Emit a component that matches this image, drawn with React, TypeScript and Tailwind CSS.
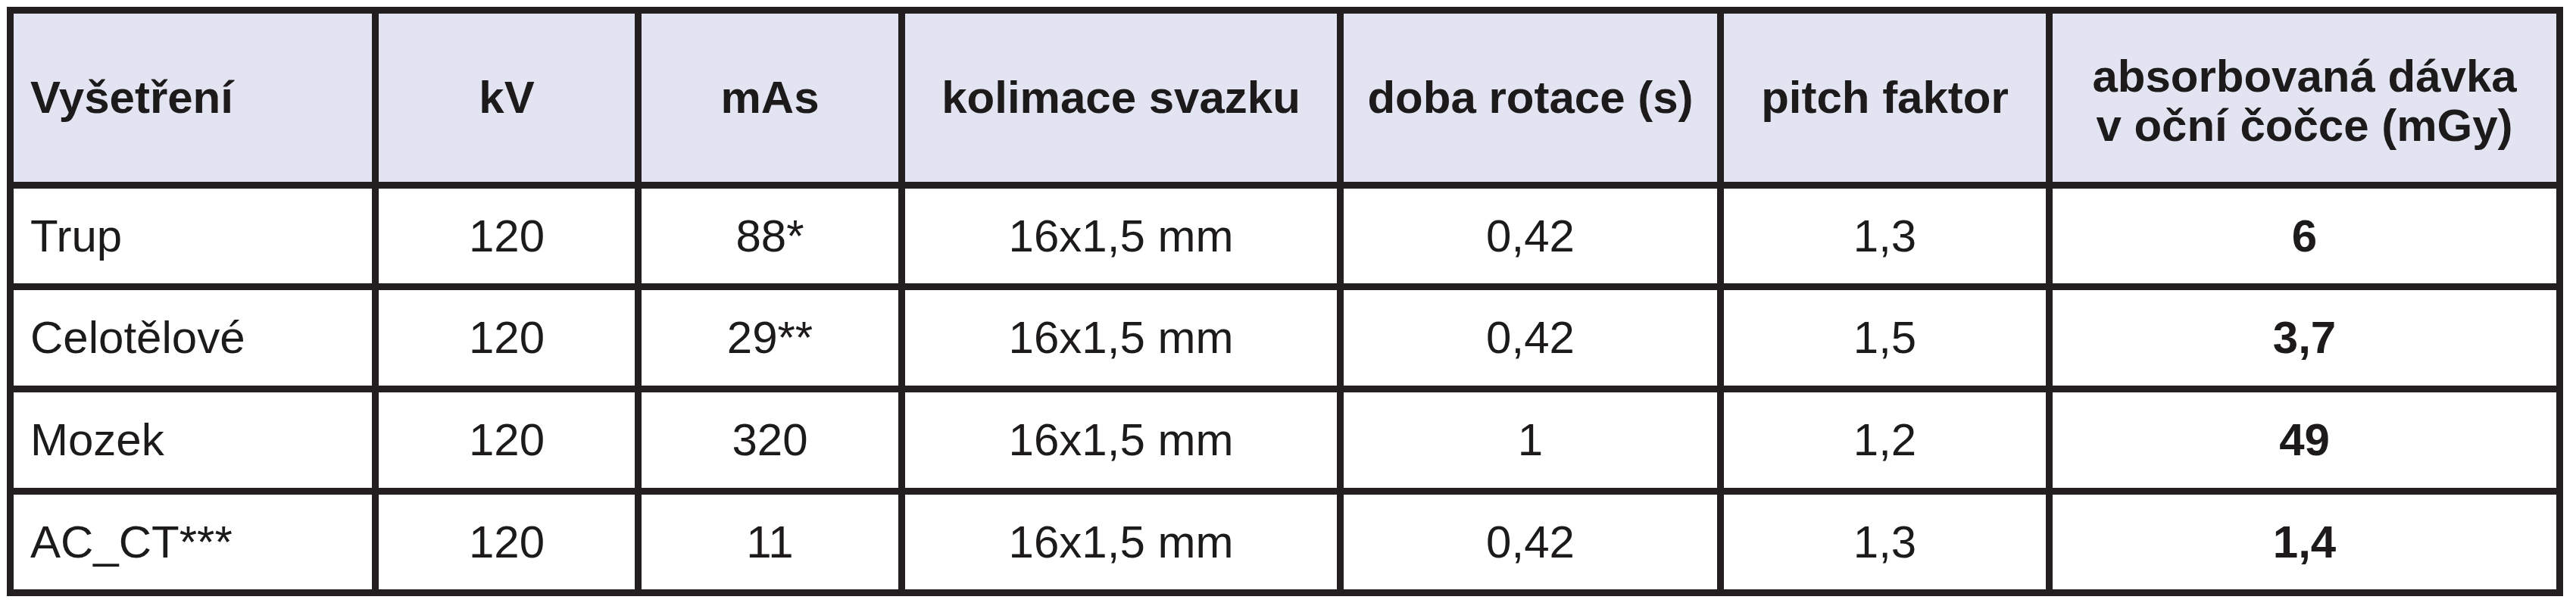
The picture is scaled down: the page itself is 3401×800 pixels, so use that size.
import React from 'react';

type Row = {
  name: string;
  kv: string;
  mas: string;
  kolimace: string;
  rotace: string;
  pitch: string;
  davka: string;
};

const rows: Row[] = [
  { name: 'Trup', kv: '120', mas: '88*', kolimace: '16x1,5 mm', rotace: '0,42', pitch: '1,3', davka: '6' },
  { name: 'Celotělové', kv: '120', mas: '29**', kolimace: '16x1,5 mm', rotace: '0,42', pitch: '1,5', davka: '3,7' },
  { name: 'Mozek', kv: '120', mas: '320', kolimace: '16x1,5 mm', rotace: '1', pitch: '1,2', davka: '49' },
  { name: 'AC_CT***', kv: '120', mas: '11', kolimace: '16x1,5 mm', rotace: '0,42', pitch: '1,3', davka: '1,4' },
];

const headers = ['kV', 'mAs', 'kolimace svazku', 'doba rotace (s)', 'pitch faktor'];

export default function App() {
  return (
    <div className="min-h-[800px] w-[3401px] bg-white pl-[9px] pt-[9px] font-['Liberation_Sans',Arial,sans-serif] text-[60px] text-[#1d1a1b]">
      <div className="grid w-[3375px] grid-cols-[473px_338px_339px_570px_493px_425px_665px] grid-rows-[222px_125px_126px_126px_125px] gap-[9px] bg-[#231f20] p-[9px]">
        {/* header */}
        <div className="flex items-center bg-[#e2e5f1] pl-[22px] font-bold leading-none">Vyšetření</div>
        {headers.map((h) => (
          <div key={h} className="flex items-center justify-center bg-[#e2e5f1] font-bold leading-none">
            {h}
          </div>
        ))}
        <div className="flex items-center justify-center bg-[#e2e5f1] pt-[8px] text-center font-bold leading-[65px]">
          absorbovaná dávka
          <br />
          v oční čočce (mGy)
        </div>

        {/* body */}
        {rows.map((r) => (
          <React.Fragment key={r.name}>
            <div className="flex items-center bg-white pl-[22px] leading-none">{r.name}</div>
            <div className="flex items-center justify-center bg-white leading-none">{r.kv}</div>
            <div className="flex items-center justify-center bg-white leading-none">{r.mas}</div>
            <div className="flex items-center justify-center bg-white leading-none">{r.kolimace}</div>
            <div className="flex items-center justify-center bg-white leading-none">{r.rotace}</div>
            <div className="flex items-center justify-center bg-white leading-none">{r.pitch}</div>
            <div className="flex items-center justify-center bg-white font-bold leading-none">{r.davka}</div>
          </React.Fragment>
        ))}
      </div>
    </div>
  );
}
